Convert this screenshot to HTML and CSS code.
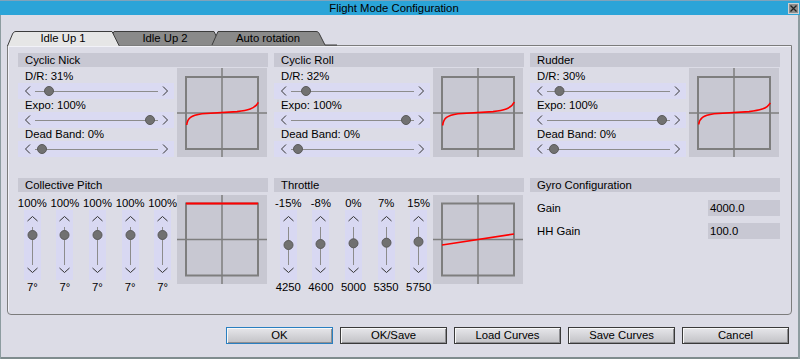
FILE: index.html
```html
<!DOCTYPE html>
<html lang="en">
<head>
  <meta charset="utf-8">
  <title>Flight Mode Configuration</title>
  <link rel="stylesheet" href="styles.css">
</head>
<body>
<div class="window">

  <div class="titlebar">
    <span class="title">Flight Mode Configuration</span>
    <svg class="close" width="11" height="11" viewBox="0 0 11 11">
      <rect x="0.5" y="0.5" width="10" height="10" fill="#8e8e8e" stroke="#cfcfcf"/>
      <path d="M2.5 2.5L8.5 8.5M8.5 2.5L2.5 8.5" stroke="#222" stroke-width="1.3"/>
    </svg>
  </div>

  <!-- tabs -->
  <div class="tabs">
    <svg class="tab-shapes" width="330" height="15" viewBox="0 0 330 15">
      <path d="M100 14L107 0.5H207L213.5 14" fill="#8a8a8a" stroke="#3c3c3c"/>
      <path d="M205 14L211 0.5H309C310.5 0.5 311.5 1.2 312 2.2L318 14H330" fill="#8a8a8a" stroke="#3c3c3c"/>
      <path d="M0.5 15L5.5 3C6.3 1.3 7.3 0.5 9 0.5H105L112 14.5V15" fill="#e6e6e6" stroke="#3c3c3c"/>
    </svg>
    <div class="tab-labels">
      <span class="tab" style="width:112px">Idle Up 1</span>
      <span class="tab" style="width:92px">Idle Up 2</span>
      <span class="tab" style="width:114px">Auto rotation</span>
    </div>
  </div>

  <div class="panel">

    <!-- Cyclic Nick -->
    <div class="group">
      <div class="ghead">Cyclic Nick</div>
      <div class="gbody">
        <div class="sliders">
          <div class="lbl first">D/R: 31%</div>
          <svg class="hslider" width="156" height="16" viewBox="0 0 156 16">
            <polyline points="12,3.5 7.5,8 12,12.5" class="chev"/>
            <line x1="17" y1="8.5" x2="140" y2="8.5" class="trk"/>
            <polyline points="145,3.5 149.5,8 145,12.5" class="chev"/>
            <circle cx="31" cy="8" r="4.5" class="knob"/>
          </svg>
          <div class="lbl">Expo: 100%</div>
          <svg class="hslider" width="156" height="16" viewBox="0 0 156 16">
            <polyline points="12,3.5 7.5,8 12,12.5" class="chev"/>
            <line x1="17" y1="8.5" x2="140" y2="8.5" class="trk"/>
            <polyline points="145,3.5 149.5,8 145,12.5" class="chev"/>
            <circle cx="132" cy="8" r="4.5" class="knob"/>
          </svg>
          <div class="lbl">Dead Band: 0%</div>
          <svg class="hslider" width="156" height="16" viewBox="0 0 156 16">
            <polyline points="12,3.5 7.5,8 12,12.5" class="chev"/>
            <line x1="17" y1="8.5" x2="140" y2="8.5" class="trk"/>
            <polyline points="145,3.5 149.5,8 145,12.5" class="chev"/>
            <circle cx="24" cy="8" r="4.5" class="knob"/>
          </svg>
        </div>
        <svg class="graph" width="90" height="89" viewBox="0 0 90 89">
          <rect x="9" y="9" width="72" height="72" class="sq"/>
          <path d="M45 0V89M0 45H90" class="axis"/>
          <path d="M9.7 57C10.5 50 14 47.5 25 45.8L60 43.6C70 42.5 78 41 81.3 34.3" class="curve"/>
        </svg>
      </div>
    </div>

    <!-- Cyclic Roll -->
    <div class="group">
      <div class="ghead">Cyclic Roll</div>
      <div class="gbody">
        <div class="sliders">
          <div class="lbl first">D/R: 32%</div>
          <svg class="hslider" width="156" height="16" viewBox="0 0 156 16">
            <polyline points="12,3.5 7.5,8 12,12.5" class="chev"/>
            <line x1="17" y1="8.5" x2="140" y2="8.5" class="trk"/>
            <polyline points="145,3.5 149.5,8 145,12.5" class="chev"/>
            <circle cx="32" cy="8" r="4.5" class="knob"/>
          </svg>
          <div class="lbl">Expo: 100%</div>
          <svg class="hslider" width="156" height="16" viewBox="0 0 156 16">
            <polyline points="12,3.5 7.5,8 12,12.5" class="chev"/>
            <line x1="17" y1="8.5" x2="140" y2="8.5" class="trk"/>
            <polyline points="145,3.5 149.5,8 145,12.5" class="chev"/>
            <circle cx="132" cy="8" r="4.5" class="knob"/>
          </svg>
          <div class="lbl">Dead Band: 0%</div>
          <svg class="hslider" width="156" height="16" viewBox="0 0 156 16">
            <polyline points="12,3.5 7.5,8 12,12.5" class="chev"/>
            <line x1="17" y1="8.5" x2="140" y2="8.5" class="trk"/>
            <polyline points="145,3.5 149.5,8 145,12.5" class="chev"/>
            <circle cx="24" cy="8" r="4.5" class="knob"/>
          </svg>
        </div>
        <svg class="graph" width="90" height="89" viewBox="0 0 90 89">
          <rect x="9" y="9" width="72" height="72" class="sq"/>
          <path d="M45 0V89M0 45H90" class="axis"/>
          <path d="M9.7 57.5C10.5 50 14 47.5 25 45.8L60 43.6C70 42.5 78 41 81.3 34" class="curve"/>
        </svg>
      </div>
    </div>

    <!-- Rudder -->
    <div class="group">
      <div class="ghead">Rudder</div>
      <div class="gbody">
        <div class="sliders">
          <div class="lbl first">D/R: 30%</div>
          <svg class="hslider" width="156" height="16" viewBox="0 0 156 16">
            <polyline points="12,3.5 7.5,8 12,12.5" class="chev"/>
            <line x1="17" y1="8.5" x2="140" y2="8.5" class="trk"/>
            <polyline points="145,3.5 149.5,8 145,12.5" class="chev"/>
            <circle cx="29.5" cy="8" r="4.5" class="knob"/>
          </svg>
          <div class="lbl">Expo: 100%</div>
          <svg class="hslider" width="156" height="16" viewBox="0 0 156 16">
            <polyline points="12,3.5 7.5,8 12,12.5" class="chev"/>
            <line x1="17" y1="8.5" x2="140" y2="8.5" class="trk"/>
            <polyline points="145,3.5 149.5,8 145,12.5" class="chev"/>
            <circle cx="132" cy="8" r="4.5" class="knob"/>
          </svg>
          <div class="lbl">Dead Band: 0%</div>
          <svg class="hslider" width="156" height="16" viewBox="0 0 156 16">
            <polyline points="12,3.5 7.5,8 12,12.5" class="chev"/>
            <line x1="17" y1="8.5" x2="140" y2="8.5" class="trk"/>
            <polyline points="145,3.5 149.5,8 145,12.5" class="chev"/>
            <circle cx="24" cy="8" r="4.5" class="knob"/>
          </svg>
        </div>
        <svg class="graph" width="90" height="89" viewBox="0 0 90 89">
          <rect x="9" y="9" width="72" height="72" class="sq"/>
          <path d="M45 0V89M0 45H90" class="axis"/>
          <path d="M9.7 56.5C10.5 50 14 47.5 25 45.8L60 43.6C70 42.5 78 41 81.3 34.8" class="curve"/>
        </svg>
      </div>
    </div>

    <!-- Collective Pitch -->
    <div class="group">
      <div class="ghead">Collective Pitch</div>
      <div class="gbody low">
        <div class="vcols">
          <div class="vcol"><div class="pct">100%</div>
            <svg class="vslider" width="17" height="70" viewBox="0 0 17 70"><polyline points="3.5,11 8.5,6.5 13.5,11" class="chev"/><line x1="8.5" y1="17" x2="8.5" y2="55" class="trk"/><polyline points="3.5,58 8.5,62.5 13.5,58" class="chev"/><circle cx="8.5" cy="25" r="4.5" class="knob"/></svg>
            <div class="val">7°</div></div>
          <div class="vcol"><div class="pct">100%</div>
            <svg class="vslider" width="17" height="70" viewBox="0 0 17 70"><polyline points="3.5,11 8.5,6.5 13.5,11" class="chev"/><line x1="8.5" y1="17" x2="8.5" y2="55" class="trk"/><polyline points="3.5,58 8.5,62.5 13.5,58" class="chev"/><circle cx="8.5" cy="25" r="4.5" class="knob"/></svg>
            <div class="val">7°</div></div>
          <div class="vcol"><div class="pct">100%</div>
            <svg class="vslider" width="17" height="70" viewBox="0 0 17 70"><polyline points="3.5,11 8.5,6.5 13.5,11" class="chev"/><line x1="8.5" y1="17" x2="8.5" y2="55" class="trk"/><polyline points="3.5,58 8.5,62.5 13.5,58" class="chev"/><circle cx="8.5" cy="25" r="4.5" class="knob"/></svg>
            <div class="val">7°</div></div>
          <div class="vcol"><div class="pct">100%</div>
            <svg class="vslider" width="17" height="70" viewBox="0 0 17 70"><polyline points="3.5,11 8.5,6.5 13.5,11" class="chev"/><line x1="8.5" y1="17" x2="8.5" y2="55" class="trk"/><polyline points="3.5,58 8.5,62.5 13.5,58" class="chev"/><circle cx="8.5" cy="25" r="4.5" class="knob"/></svg>
            <div class="val">7°</div></div>
          <div class="vcol"><div class="pct">100%</div>
            <svg class="vslider" width="17" height="70" viewBox="0 0 17 70"><polyline points="3.5,11 8.5,6.5 13.5,11" class="chev"/><line x1="8.5" y1="17" x2="8.5" y2="55" class="trk"/><polyline points="3.5,58 8.5,62.5 13.5,58" class="chev"/><circle cx="8.5" cy="25" r="4.5" class="knob"/></svg>
            <div class="val">7°</div></div>
        </div>
        <svg class="graph" width="90" height="89" viewBox="0 0 90 89">
          <rect x="9" y="8.5" width="72" height="72" class="sq"/>
          <path d="M45 0V89M0 44.5H90" class="axis"/>
          <path d="M9 8.5H81" class="curve flat"/>
        </svg>
      </div>
    </div>

    <!-- Throttle -->
    <div class="group">
      <div class="ghead">Throttle</div>
      <div class="gbody low">
        <div class="vcols">
          <div class="vcol"><div class="pct">-15%</div>
            <svg class="vslider" width="17" height="70" viewBox="0 0 17 70"><polyline points="3.5,11 8.5,6.5 13.5,11" class="chev"/><line x1="8.5" y1="17" x2="8.5" y2="55" class="trk"/><polyline points="3.5,58 8.5,62.5 13.5,58" class="chev"/><circle cx="8.5" cy="35" r="4.5" class="knob"/></svg>
            <div class="val">4250</div></div>
          <div class="vcol"><div class="pct">-8%</div>
            <svg class="vslider" width="17" height="70" viewBox="0 0 17 70"><polyline points="3.5,11 8.5,6.5 13.5,11" class="chev"/><line x1="8.5" y1="17" x2="8.5" y2="55" class="trk"/><polyline points="3.5,58 8.5,62.5 13.5,58" class="chev"/><circle cx="8.5" cy="34" r="4.5" class="knob"/></svg>
            <div class="val">4600</div></div>
          <div class="vcol"><div class="pct">0%</div>
            <svg class="vslider" width="17" height="70" viewBox="0 0 17 70"><polyline points="3.5,11 8.5,6.5 13.5,11" class="chev"/><line x1="8.5" y1="17" x2="8.5" y2="55" class="trk"/><polyline points="3.5,58 8.5,62.5 13.5,58" class="chev"/><circle cx="8.5" cy="33.3" r="4.5" class="knob"/></svg>
            <div class="val">5000</div></div>
          <div class="vcol"><div class="pct">7%</div>
            <svg class="vslider" width="17" height="70" viewBox="0 0 17 70"><polyline points="3.5,11 8.5,6.5 13.5,11" class="chev"/><line x1="8.5" y1="17" x2="8.5" y2="55" class="trk"/><polyline points="3.5,58 8.5,62.5 13.5,58" class="chev"/><circle cx="8.5" cy="32.7" r="4.5" class="knob"/></svg>
            <div class="val">5350</div></div>
          <div class="vcol"><div class="pct">15%</div>
            <svg class="vslider" width="17" height="70" viewBox="0 0 17 70"><polyline points="3.5,11 8.5,6.5 13.5,11" class="chev"/><line x1="8.5" y1="17" x2="8.5" y2="55" class="trk"/><polyline points="3.5,58 8.5,62.5 13.5,58" class="chev"/><circle cx="8.5" cy="31.7" r="4.5" class="knob"/></svg>
            <div class="val">5750</div></div>
        </div>
        <svg class="graph" width="90" height="89" viewBox="0 0 90 89">
          <rect x="9" y="8.5" width="72" height="72" class="sq"/>
          <path d="M45 0V89M0 44.5H90" class="axis"/>
          <path d="M9 50L81 39" class="curve"/>
        </svg>
      </div>
    </div>

    <!-- Gyro -->
    <div class="group">
      <div class="ghead">Gyro Configuration</div>
      <div class="gyro">
        <div class="grow"><span>Gain</span><span class="field">4000.0</span></div>
        <div class="grow"><span>HH Gain</span><span class="field">100.0</span></div>
      </div>
    </div>

  </div>

  <div class="buttons">
    <div class="btn default">OK</div>
    <div class="btn">OK/Save</div>
    <div class="btn">Load Curves</div>
    <div class="btn">Save Curves</div>
    <div class="btn">Cancel</div>
  </div>

</div>
</body>
</html>
```

FILE: styles.css
```css
body{
  margin:0;
  background:#dcdce6;
  font-family:"Liberation Sans", Arial, sans-serif;
  font-size:11.3px;
  color:#000;
}

.window{
  width:800px;
  height:359px;
  overflow:hidden;
  box-shadow:inset 1px 0 0 #8d9ca0, inset -2px 0 0 #8d9ca0, inset 0 -2px 0 #7f8c8e;
}

/* title bar */
.titlebar{
  position:relative;
  height:14px;
  border-top:1px solid #7fa3bb;
  background:#2ba4d8;
  display:flex;
  align-items:center;
  justify-content:center;
  padding-right:12px;
}

.title{
  font-size:11.3px;
  line-height:14px;
}

.close{
  position:absolute;
  right:1px;
  top:2px;
}

/* tabs */
.tabs{
  position:relative;
  z-index:1;
  width:330px;
  height:15px;
  margin:16px 0 0 7px;
}

.tab-shapes{
  position:absolute;
  left:0;
  top:0;
}

.tab-labels{
  position:relative;
  display:flex;
  padding-top:1px;
  line-height:13px;
}

.tab{
  text-align:center;
}

/* main frame */
.panel{
  box-sizing:border-box;
  width:785px;
  height:270px;
  margin:-1px 0 0 7px;
  border:1px solid #7c7c7c;
  border-radius:0 0 4px 4px;
  box-shadow:inset 1px 1px 0 #f2f2f8;
  padding:7px 10px 0;
  display:grid;
  grid-template-columns:repeat(3, 250px);
  column-gap:6px;
  row-gap:21px;
  align-content:start;
}

.ghead{
  height:14px;
  line-height:14px;
  background:#c8c8d3;
  padding-left:7px;
}

.gbody{
  display:flex;
  margin-top:1px;
}

.gbody.low{
  margin-top:3px;
}

.sliders{
  width:156px;
  margin-right:3px;
}

.lbl{
  line-height:13px;
  padding-left:7px;
}

.lbl.first{
  padding-top:2px;
}

.hslider{
  display:block;
  background:#dadaf2;
}

.vslider{
  display:block;
  background:#d8d8f2;
}

.chev{
  fill:none;
  stroke:#333;
  stroke-width:1;
}

.trk{
  stroke:#8c8c8c;
  stroke-width:1;
}

.knob{
  fill:#717171;
  stroke:#5a5a5a;
  stroke-width:1;
}

.graph{
  display:block;
  flex:none;
  background:#c8c8d2;
}

.sq{
  fill:none;
  stroke:#7e7e7e;
  stroke-width:2;
}

.axis{
  fill:none;
  stroke:#7e7e7e;
  stroke-width:1.5;
}

.curve{
  fill:none;
  stroke:#ff0000;
  stroke-width:1.6;
}

.curve.flat{
  stroke-width:2;
}

/* collective / throttle columns */
.vcols{
  display:flex;
  width:163px;
  margin:0 -2px 0 -2px;
}

.vcol{
  flex:1;
  display:flex;
  flex-direction:column;
  align-items:center;
}

.pct{
  height:14px;
  line-height:14px;
  margin-top:1px;
}

.val{
  line-height:14px;
}

/* gyro */
.gyro{
  padding:8px 0 0 7px;
}

.grow{
  display:flex;
  justify-content:space-between;
  align-items:center;
  height:16px;
  margin-bottom:7px;
}

.field{
  width:70px;
  height:16px;
  line-height:16px;
  padding-left:2px;
  background:#c8c8d3;
}

/* bottom buttons */
.buttons{
  display:flex;
  justify-content:flex-end;
  gap:7px;
  margin-top:12px;
  padding-right:11px;
}

.btn{
  width:105px;
  height:15px;
  line-height:15px;
  text-align:center;
  border:1px solid #3a3a3a;
  background:linear-gradient(#e6e6ea, #c2c2c6);
  box-shadow:inset 1px 1px 0 #f8f8f8, inset -1px -1px 0 #8e8e92;
}

.btn.default{
  border-color:#2a7fc0;
}
```
